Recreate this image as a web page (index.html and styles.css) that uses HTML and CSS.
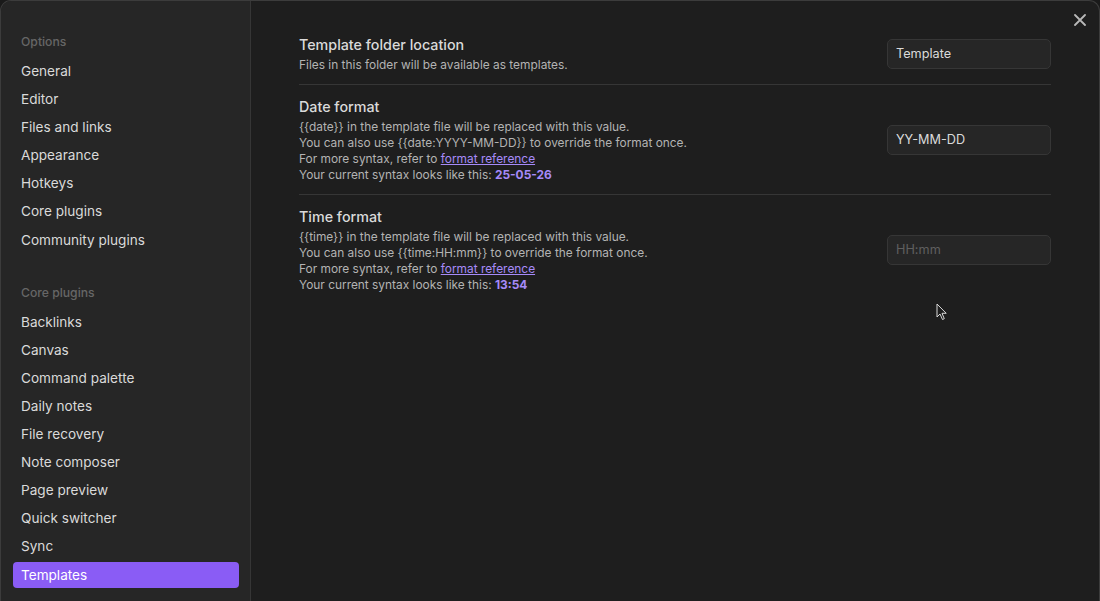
FILE: index.html
```html
<!DOCTYPE html>
<html>
<head>
<meta charset="utf-8">
<link rel="stylesheet" href="styles.css">
</head>
<body>
<div class="modal">
  <aside class="sidebar">
    <div class="group-title">Options</div>
    <nav class="nav">
      <div class="nav-item">General</div>
      <div class="nav-item">Editor</div>
      <div class="nav-item">Files and links</div>
      <div class="nav-item">Appearance</div>
      <div class="nav-item">Hotkeys</div>
      <div class="nav-item">Core plugins</div>
      <div class="nav-item">Community plugins</div>
    </nav>
    <div class="group-title second">Core plugins</div>
    <nav class="nav">
      <div class="nav-item">Backlinks</div>
      <div class="nav-item">Canvas</div>
      <div class="nav-item">Command palette</div>
      <div class="nav-item">Daily notes</div>
      <div class="nav-item">File recovery</div>
      <div class="nav-item">Note composer</div>
      <div class="nav-item">Page preview</div>
      <div class="nav-item">Quick switcher</div>
      <div class="nav-item">Sync</div>
      <div class="nav-item active">Templates</div>
    </nav>
  </aside>
  <main class="content">
    <div class="setting">
      <div class="info">
        <div class="name">Template folder location</div>
        <div class="desc">Files in this folder will be available as templates.</div>
      </div>
      <div class="control"><div class="input">Template</div></div>
    </div>
    <div class="setting">
      <div class="info">
        <div class="name">Date format</div>
        <div class="desc">
          <div>{{date}} in the template file will be replaced with this value.</div>
          <div>You can also use {{date:YYYY-MM-DD}} to override the format once.</div>
          <div>For more syntax, refer to <a class="link">format reference</a></div>
          <div>Your current syntax looks like this: <b class="value">25-05-26</b></div>
        </div>
      </div>
      <div class="control"><div class="input">YY-MM-DD</div></div>
    </div>
    <div class="setting">
      <div class="info">
        <div class="name">Time format</div>
        <div class="desc">
          <div>{{time}} in the template file will be replaced with this value.</div>
          <div>You can also use {{time:HH:mm}} to override the format once.</div>
          <div>For more syntax, refer to <a class="link">format reference</a></div>
          <div>Your current syntax looks like this: <b class="value">13:54</b></div>
        </div>
      </div>
      <div class="control"><div class="input placeholder">HH:mm</div></div>
    </div>
  </main>
  <div class="close">
    <svg width="12" height="12" viewBox="0 0 12 12"><path d="M1 1L11 11M11 1L1 11" stroke="#b8b8b8" stroke-width="1.8" stroke-linecap="round"/></svg>
  </div>
  <div class="cursor">
    <svg width="12" height="18" viewBox="0 0 12 18"><path d="M1 1L1 14L4 11L6.5 16.5L8.3 15.7L6 10.3L10.2 10.3Z" fill="#1e1e1e" stroke="#d8d8d8" stroke-width="1" stroke-linejoin="round"/></svg>
  </div>
</div>
</body>
</html>
```
FILE: styles.css
```css
html, body {
  margin: 0;
  padding: 0;
  background: #1a1a1a;
  width: 1100px;
  height: 601px;
  overflow: hidden;
}
body {
  font-family: Inter, "Noto Sans", sans-serif;
  -webkit-font-smoothing: antialiased;
}
.modal {
  position: relative;
  display: flex;
  width: 1100px;
  height: 601px;
  box-sizing: border-box;
  border: 1px solid #3c3c3c;
  border-bottom: none;
  border-radius: 11px 11px 0 0;
  overflow: hidden;
  background: #1e1e1e;
}
.sidebar {
  width: 250px;
  flex: none;
  background: #262626;
  border-right: 1px solid #363636;
  padding: 32px 11px 0 12px;
  box-sizing: border-box;
}
.group-title {
  font-size: 12.2px;
  font-weight: 500;
  color: #666;
  line-height: 18px;
  padding-left: 8px;
  margin-bottom: 7px;
}
.group-title.second {
  margin-top: 31px;
}
.nav {
  display: flex;
  flex-direction: column;
  gap: 2px;
}
.nav-item {
  height: 26.1px;
  line-height: 26px;
  padding-left: 8px;
  font-size: 13.6px;
  color: #dadada;
  border-radius: 4px;
}
.nav-item.active {
  background: #8a5cf5;
  color: #ffffff;
}
.content {
  flex: 1;
  padding: 22px 48px 0 48px;
}
.setting {
  display: flex;
  align-items: center;
  padding: 11px 0;
  border-top: 1px solid #363636;
}
.setting:first-child {
  border-top: none;
}
.info {
  flex: 1;
}
.name {
  font-size: 14.3px;
  line-height: 22px;
  color: #dadada;
  font-weight: 500;
}
.desc {
  margin-top: 1px;
  font-size: 11.9px;
  line-height: 16px;
  color: #b3b3b3;
}
.link {
  color: #a68af9;
  text-decoration: underline;
}
.value {
  color: #a68af9;
  font-weight: 700;
}
.control {
  flex: none;
}
.input {
  width: 164px;
  height: 30px;
  box-sizing: border-box;
  background: #262626;
  border: 1px solid #363636;
  border-radius: 5px;
  padding-left: 8px;
  font-size: 12.7px;
  line-height: 28px;
  color: #dadada;
}
.input.placeholder {
  color: #5f5f5f;
}
.close {
  position: absolute;
  top: 13px;
  right: 13px;
  width: 12px;
  height: 12px;
  display: flex;
}
.cursor {
  position: absolute;
  left: 935px;
  top: 302px;
  display: flex;
}
```
